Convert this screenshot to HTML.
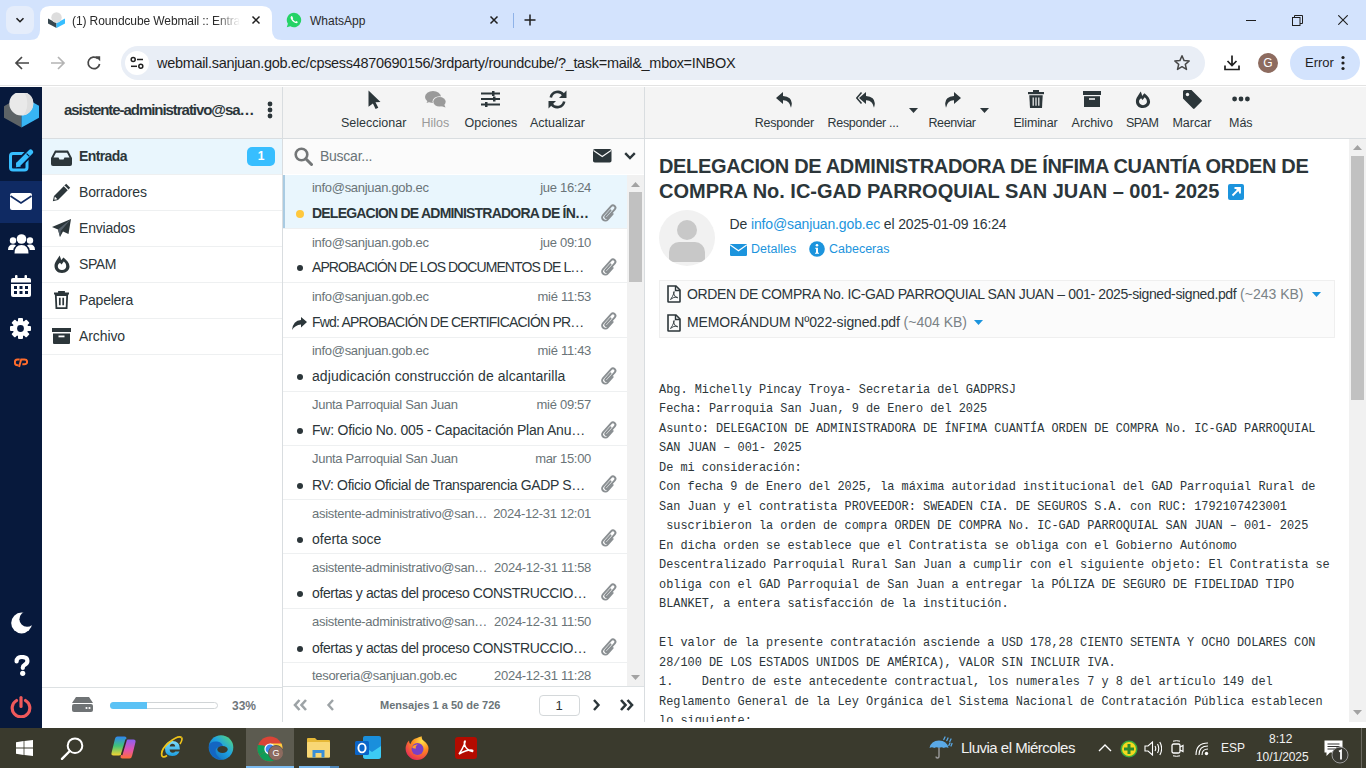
<!DOCTYPE html>
<html><head><meta charset="utf-8">
<style>
*{box-sizing:border-box;margin:0;padding:0}
html,body{width:1366px;height:768px;overflow:hidden;background:#fff;font-family:"Liberation Sans",sans-serif;color:#2c363a}
.a{position:absolute}
.nw{white-space:nowrap}
/* chrome */
#tabs{left:0;top:0;width:1366px;height:40px;background:#d3e3fd}
#toolbar{left:0;top:40px;width:1366px;height:46px;background:#fff;border-bottom:1px solid #e3e3e3}
#page{left:0;top:87px;width:1366px;height:641px;background:#fff}
#taskbar{left:0;top:728px;width:1366px;height:40px;background:#3a3a2d}
/* roundcube */
#menu{left:0;top:87px;width:42px;height:641px;background:#07193c}
#folders{left:42px;top:87px;width:241px;height:635px;background:#fff;border-right:1px solid #d9dde0}
#list{left:283px;top:87px;width:362px;height:635px;background:#fff;border-right:1px solid #d9dde0}
#msg{left:645px;top:87px;width:721px;height:641px;background:#fff}
.hdr{background:#f4f4f4;border-bottom:1px solid #d9dde0}
</style></head><body>
<div id="tabs" class="a">
  <div class="a" style="left:6px;top:6px;width:28px;height:28px;border-radius:8px;background:#e5edfb"></div>
  <svg class="a" style="left:14px;top:14px" width="12" height="12" viewBox="0 0 12 12"><path d="M2.5 4.2 L6 7.7 L9.5 4.2" fill="none" stroke="#1f1f1f" stroke-width="1.6"/></svg>
  <!-- active tab -->
  <svg class="a" style="left:30px;top:6px" width="260" height="34" viewBox="0 0 260 34"><path d="M0 34 Q10 34 10 24 L10 10 Q10 0 20 0 L232 0 Q242 0 242 10 L242 24 Q242 34 252 34 Z" fill="#fff"/></svg>
  <svg class="a" style="left:48px;top:12px" width="17" height="16" viewBox="0 0 17 16"><path d="M0 6.5 L8.5 11 L8.5 16 L0 11.5 Z" fill="#37474f"/><path d="M8.5 11 L17 6.5 L17 11.5 L8.5 16 Z" fill="#37beff"/><circle cx="8.5" cy="5.5" r="5.2" fill="#ddd"/><path d="M0 6.5 L8.5 11 L17 6.5 L17 8 L8.5 12.5 L0 8Z" fill="#37474f" opacity="0"/></svg>
  <div class="a nw" style="left:72px;top:14px;width:168px;overflow:hidden;font-size:12px;color:#2a2a2a;letter-spacing:-0.1px;-webkit-mask-image:linear-gradient(90deg,#000 85%,transparent)">(1) Roundcube Webmail :: Entrada</div>
  <svg class="a" style="left:251px;top:15px" width="10" height="10" viewBox="0 0 10 10"><path d="M1.5 1.5 L8.5 8.5 M8.5 1.5 L1.5 8.5" stroke="#1f1f1f" stroke-width="1.5"/></svg>
  <!-- whatsapp tab -->
  <svg class="a" style="left:286px;top:12px" width="16" height="16" viewBox="0 0 16 16"><path d="M8 0.8 A7.2 7.2 0 1 1 4.3 14.2 L0.8 15.2 L1.9 11.8 A7.2 7.2 0 0 1 8 0.8Z" fill="#25d366"/><path d="M5.2 4.2 C4.6 4.8 4.4 5.6 4.9 6.8 C5.6 8.5 7.3 10.4 9.4 11.1 C10.5 11.5 11.3 11.1 11.7 10.4 L11.6 9.8 L10.2 9.1 L9.5 9.8 C8.4 9.4 7.2 8.2 6.6 7.1 L7.2 6.4 L6.6 4.9 L6 4.1Z" fill="#fff"/></svg>
  <div class="a nw" style="left:310px;top:14px;font-size:12px;color:#2a2a2a">WhatsApp</div>
  <svg class="a" style="left:489px;top:15px" width="10" height="10" viewBox="0 0 10 10"><path d="M1.5 1.5 L8.5 8.5 M8.5 1.5 L1.5 8.5" stroke="#1f1f1f" stroke-width="1.5"/></svg>
  <div class="a" style="left:513px;top:13px;width:1px;height:15px;background:#8fb3e8"></div>
  <svg class="a" style="left:524px;top:14px" width="12" height="12" viewBox="0 0 12 12"><path d="M6 0.5 V11.5 M0.5 6 H11.5" stroke="#1f1f1f" stroke-width="1.5"/></svg>
  <!-- window controls -->
  <div class="a" style="left:1246px;top:20px;width:10px;height:1px;background:#1f1f1f"></div>
  <svg class="a" style="left:1292px;top:15px" width="11" height="11" viewBox="0 0 11 11"><rect x="0.5" y="2.5" width="7.5" height="8" fill="none" stroke="#1f1f1f"/><path d="M2.5 2.5 V0.5 H10.5 V8.5 H8" fill="none" stroke="#1f1f1f"/></svg>
  <svg class="a" style="left:1338px;top:15px" width="10" height="10" viewBox="0 0 10 10"><path d="M0.3 0.3 L9.7 9.7 M9.7 0.3 L0.3 9.7" stroke="#1f1f1f" stroke-width="1.1"/></svg>
</div>
<div id="toolbar" class="a">
  <svg class="a" style="left:14px;top:15px" width="16" height="16" viewBox="0 0 16 16"><path d="M15 8 H2 M8 2 L2 8 L8 14" fill="none" stroke="#474747" stroke-width="1.7"/></svg>
  <svg class="a" style="left:50px;top:15px" width="16" height="16" viewBox="0 0 16 16"><path d="M1 8 H14 M8 2 L14 8 L8 14" fill="none" stroke="#b4b4b4" stroke-width="1.7"/></svg>
  <svg class="a" style="left:86px;top:15px" width="16" height="16" viewBox="0 0 16 16"><path d="M13.6 9 A5.8 5.8 0 1 1 11.8 3.6" fill="none" stroke="#474747" stroke-width="1.7"/><path d="M9.2 1.2 H14.2 V6.2 Z" fill="#474747"/></svg>
  <div class="a" style="left:121px;top:6px;width:1084px;height:34px;border-radius:17px;background:#e9eef6"></div>
  <div class="a" style="left:125px;top:11px;width:24px;height:24px;border-radius:12px;background:#fff"></div>
  <svg class="a" style="left:130px;top:16px" width="14" height="14" viewBox="0 0 14 14"><circle cx="3.2" cy="3.5" r="2" fill="none" stroke="#1f1f1f" stroke-width="1.5"/><path d="M7 3.5 H13" stroke="#1f1f1f" stroke-width="1.5"/><circle cx="10.8" cy="10.3" r="2" fill="none" stroke="#1f1f1f" stroke-width="1.5"/><path d="M1 10.3 H7" stroke="#1f1f1f" stroke-width="1.5"/></svg>
  <div class="a nw" style="left:157px;top:15px;font-size:14.5px;letter-spacing:-0.31px;color:#1f1f1f">webmail.sanjuan.gob.ec/cpsess4870690156/3rdparty/roundcube/?_task=mail&amp;_mbox=INBOX</div>
  <svg class="a" style="left:1173px;top:14px" width="18" height="18" viewBox="0 0 18 18"><path d="M9 1.8 L11.1 6.6 L16.2 7 L12.3 10.4 L13.5 15.4 L9 12.7 L4.5 15.4 L5.7 10.4 L1.8 7 L6.9 6.6 Z" fill="none" stroke="#474747" stroke-width="1.5" stroke-linejoin="round"/></svg>
  <svg class="a" style="left:1223px;top:14px" width="18" height="18" viewBox="0 0 18 18"><path d="M9 1.5 V11.5 M4.5 7 L9 11.5 L13.5 7 M2 11.5 V15.5 H16 V11.5" fill="none" stroke="#1f1f1f" stroke-width="1.7"/></svg>
  <div class="a" style="left:1258px;top:13px;width:20px;height:20px;border-radius:10px;background:#8d6b5f;color:#fff;font-size:12px;text-align:center;line-height:20px">G</div>
  <div class="a" style="left:1290px;top:6px;width:70px;height:34px;border-radius:17px;background:#d3e3fd"></div>
  <div class="a nw" style="left:1305px;top:15px;font-size:13px;color:#1f1f1f">Error</div>
  <svg class="a" style="left:1340px;top:15px" width="6" height="16" viewBox="0 0 6 16"><circle cx="3" cy="2.5" r="1.6" fill="#1f1f1f"/><circle cx="3" cy="8" r="1.6" fill="#1f1f1f"/><circle cx="3" cy="13.5" r="1.6" fill="#1f1f1f"/></svg>
</div>
<div id="page" class="a"></div>
<div id="menu" class="a">
  <!-- logo -->
  <svg class="a" style="left:4px;top:6px" width="36" height="36" viewBox="0 0 36 36"><path d="M0 13.3 L17.5 3 L17.5 34.5 L0 24.8 Z" fill="#5d6366"/><path d="M17.5 3 L35 12.8 L35 24.8 L17.5 34.5 Z" fill="#37b4f3"/><circle cx="17.3" cy="10.6" r="12" fill="#e9e9e9"/><path d="M17.3 -1.4 A12 12 0 0 1 17.3 22.6 A6 12 0 0 0 17.3 -1.4Z" fill="#dedede"/></svg>
  <!-- compose -->
  <svg class="a" style="left:9px;top:62px" width="25" height="24" viewBox="0 0 25 24"><rect x="1.5" y="4.5" width="16.5" height="16.5" rx="2.5" fill="none" stroke="#37beff" stroke-width="3"/><path d="M8.5 16 L22.5 2" stroke="#07193c" stroke-width="8.5"/><path d="M9.6 14.9 L21.6 2.9" stroke="#37beff" stroke-width="5" stroke-linecap="round"/><path d="M7 18.2 L7.6 13 L12 17.4Z" fill="#37beff"/><path d="M17.6 4.6 L20.4 7.4" stroke="#07193c" stroke-width="1.1"/></svg>
  <!-- mail selected -->
  <div class="a" style="left:0;top:94px;width:42px;height:42px;background:#0f2a63"></div>
  <svg class="a" style="left:10px;top:106px" width="22" height="17" viewBox="0 0 22 17"><rect x="0" y="0" width="22" height="17" rx="2" fill="#fff"/><path d="M0.5 3 L11 10 L21.5 3" fill="none" stroke="#0f2a63" stroke-width="1.6"/></svg>
  <!-- contacts -->
  <svg class="a" style="left:8px;top:147px" width="27" height="20" viewBox="0 0 27 20"><circle cx="13.5" cy="5" r="4.8" fill="#fff"/><path d="M6.5 19.5 Q6.5 11 13.5 11 Q20.5 11 20.5 19.5 Z" fill="#fff"/><circle cx="5" cy="6.5" r="3.2" fill="#fff"/><circle cx="22" cy="6.5" r="3.2" fill="#fff"/><path d="M0 16 Q0 10.5 5 10.5 Q7 10.5 8 11.5 Q5.5 13.5 5.3 16Z" fill="#fff"/><path d="M27 16 Q27 10.5 22 10.5 Q20 10.5 19 11.5 Q21.5 13.5 21.7 16Z" fill="#fff"/></svg>
  <!-- calendar -->
  <svg class="a" style="left:11px;top:188px" width="20" height="22" viewBox="0 0 20 22"><rect x="0" y="3" width="20" height="19" rx="2" fill="#fff"/><rect x="4" y="0" width="2.5" height="5" rx="1" fill="#fff"/><rect x="13.5" y="0" width="2.5" height="5" rx="1" fill="#fff"/><rect x="0" y="7.5" width="20" height="1.5" fill="#07193c"/><g fill="#07193c"><rect x="3" y="11" width="3" height="3"/><rect x="8.5" y="11" width="3" height="3"/><rect x="14" y="11" width="3" height="3"/><rect x="3" y="16" width="3" height="3"/><rect x="8.5" y="16" width="3" height="3"/><rect x="14" y="16" width="3" height="3"/></g></svg>
  <!-- gear -->
  <svg class="a" style="left:10px;top:231px" width="21" height="21" viewBox="0 0 21 21"><g fill="#fff" transform="translate(10.5 10.5)"><circle r="7.8"/><rect x="-2.5" y="-10.5" width="5" height="21" rx="1"/><rect x="-2.5" y="-10.5" width="5" height="21" rx="1" transform="rotate(45)"/><rect x="-2.5" y="-10.5" width="5" height="21" rx="1" transform="rotate(90)"/><rect x="-2.5" y="-10.5" width="5" height="21" rx="1" transform="rotate(135)"/></g><circle cx="10.5" cy="10.5" r="3.4" fill="#07193c"/></svg>
  <!-- cpanel -->
  <svg class="a" style="left:14px;top:271px" width="14" height="9.5" viewBox="0 0 16 10"><path d="M6.5 1.2 H3.8 Q1 1.2 1 4.5 Q1 7.8 3.8 7.8 H5.2" fill="none" stroke="#ff6c2c" stroke-width="2.2"/><path d="M5.8 9.8 L8.2 1.2 H11.8 Q15 1.2 15 4 Q15 6.8 11.8 6.8 H9.5" fill="none" stroke="#ff6c2c" stroke-width="2.2"/></svg>
  <!-- moon -->
  <svg class="a" style="left:11px;top:525px" width="21" height="22" viewBox="0 0 21 22"><defs><mask id="mm"><rect width="21" height="22" fill="#fff"/><circle cx="16" cy="7.2" r="7.6" fill="#000"/></mask></defs><circle cx="10.6" cy="11" r="10.4" fill="#fff" mask="url(#mm)"/></svg>
  <!-- question -->
  <svg class="a" style="left:14px;top:568px" width="16" height="21" viewBox="0 0 16 21"><path d="M2.6 6.4 Q2.6 2 8 2 Q13.4 2 13.4 6 Q13.4 8.4 10.6 9.9 Q8.8 10.9 8.8 12.4 L8.8 13" fill="none" stroke="#fff" stroke-width="4.2" stroke-linecap="round"/><circle cx="8.7" cy="18.3" r="2.6" fill="#fff"/></svg>
  <!-- power -->
  <svg class="a" style="left:10px;top:609px" width="22" height="22" viewBox="0 0 22 22"><path d="M6.5 4.5 A8.8 8.8 0 1 0 15.5 4.5" fill="none" stroke="#f0595b" stroke-width="3.2" stroke-linecap="round"/><path d="M11 1.6 V10.5" stroke="#f0595b" stroke-width="3.2" stroke-linecap="round"/></svg>
</div>
<div id="folders" class="a">
  <div class="a hdr" style="left:0;top:0;width:240px;height:52px"></div>
  <div class="a nw" style="left:22px;top:14px;font-size:15px;font-weight:bold;letter-spacing:-1.05px;color:#2c363a">asistente-administrativo@sa…</div>
  <svg class="a" style="left:224px;top:14px" width="8" height="18" viewBox="0 0 8 18"><circle cx="4" cy="3" r="2.4" fill="#2c363a"/><circle cx="4" cy="9" r="2.4" fill="#2c363a"/><circle cx="4" cy="15" r="2.4" fill="#2c363a"/></svg>
  <div class="a" style="left:0;top:52px;width:240px;height:36px;background:#e9f6fd"></div>
  <div class="a" style="left:0;top:87px;width:240px;height:1px;background:#eef0f1"></div>
  <div class="a" style="left:0;top:123px;width:240px;height:1px;background:#eef0f1"></div>
  <div class="a" style="left:0;top:159px;width:240px;height:1px;background:#eef0f1"></div>
  <div class="a" style="left:0;top:195px;width:240px;height:1px;background:#eef0f1"></div>
  <div class="a" style="left:0;top:231px;width:240px;height:1px;background:#eef0f1"></div>
  <div class="a" style="left:0;top:267px;width:240px;height:1px;background:#eef0f1"></div>
  <!-- inbox icon -->
  <svg class="a" style="left:9px;top:63px" width="21" height="16" viewBox="0 0 21 16"><path d="M4 0.5 H17 L21 8 V14 Q21 16 19 16 H2 Q0 16 0 14 V8 Z" fill="#2c363a"/><path d="M5 2.8 H16 L18.5 7.5 H13.5 L12.5 9.5 H8.5 L7.5 7.5 H2.5 Z" fill="#e9f6fd"/></svg>
  <div class="a nw" style="left:37px;top:61px;font-size:14px;font-weight:bold;letter-spacing:-0.6px;color:#2c363a">Entrada</div>
  <div class="a" style="left:205px;top:60px;width:28px;height:19px;border-radius:5px;background:#37beff;color:#fff;font-size:12px;font-weight:bold;text-align:center;line-height:19px">1</div>
  <!-- pencil -->
  <svg class="a" style="left:10px;top:96px" width="19" height="19" viewBox="0 0 19 19"><path d="M14.2 0.8 L18.2 4.8 L6 17 L0.8 18.2 L2 13 Z" fill="#2c363a"/><path d="M12.2 2.8 L16.2 6.8" stroke="#fff" stroke-width="1.2"/><path d="M2.8 13.6 L5.4 16.2 L2.3 16.8Z" fill="#fff"/></svg>
  <div class="a nw" style="left:37px;top:97px;font-size:14px;letter-spacing:-0.15px">Borradores</div>
  <!-- plane -->
  <svg class="a" style="left:10px;top:132px" width="19" height="18" viewBox="0 0 19 18"><path d="M19 0 L0 8 L6 10.5 L8 18 L11 12.5 L16.5 15 Z" fill="#2c363a"/><path d="M19 0 L6 10.5 L8 18 L8.8 12 Z" fill="#56606a"/></svg>
  <div class="a nw" style="left:37px;top:133px;font-size:14px;letter-spacing:-0.2px">Enviados</div>
  <!-- fire -->
  <svg class="a" style="left:12px;top:168px" width="16" height="18" viewBox="0 0 16 18"><path d="M8 18 C3 18 0.5 14.5 0.5 11 C0.5 7 3.5 4.5 5.5 0.5 C6.5 2.5 7 4 7 5.2 L9.5 2.5 C13 5.5 15.5 8 15.5 11.5 C15.5 15 12.5 18 8 18Z" fill="#2c363a"/><path d="M8 15 C5.6 15 3.8 13.3 3.8 11.2 C3.8 9.8 4.6 8.8 6 7.8 L7.5 9.5 L9.8 6.5 C11.3 7.8 12.2 9.3 12.2 11.2 C12.2 13.3 10.4 15 8 15Z" fill="#fff"/></svg>
  <div class="a nw" style="left:37px;top:169px;font-size:14px;letter-spacing:-0.4px">SPAM</div>
  <!-- trash -->
  <svg class="a" style="left:12px;top:204px" width="15" height="18" viewBox="0 0 15 18"><path d="M0 2.5 H15 M5 2.5 V0.8 H10 V2.5" fill="none" stroke="#2c363a" stroke-width="1.8"/><path d="M1.8 4 H13.2 L12.6 17.2 H2.4 Z" fill="none" stroke="#2c363a" stroke-width="1.8"/><path d="M5.8 6.8 V14.2 M9.2 6.8 V14.2" stroke="#2c363a" stroke-width="1.7"/></svg>
  <div class="a nw" style="left:37px;top:205px;font-size:14px;letter-spacing:-0.25px">Papelera</div>
  <!-- archive -->
  <svg class="a" style="left:10px;top:241px" width="19" height="16" viewBox="0 0 19 16"><rect x="0" y="0" width="19" height="4" fill="#2c363a"/><path d="M1 5.5 H18 V15 Q18 16 17 16 H2 Q1 16 1 15 Z" fill="#2c363a"/><rect x="6.5" y="7.5" width="6" height="1.8" fill="#fff"/></svg>
  <div class="a nw" style="left:37px;top:241px;font-size:14px;letter-spacing:-0.1px">Archivo</div>
  <!-- footer -->
  <div class="a" style="left:0;top:600px;width:240px;height:1px;background:#dde1e3"></div>
  <svg class="a" style="left:30px;top:610px" width="21" height="15" viewBox="0 0 21 15"><path d="M4 0 H17 L21 6 H0 Z" fill="#6f7375"/><rect x="0" y="7" width="21" height="8" rx="2" fill="#6f7375"/><circle cx="14.5" cy="11" r="1.1" fill="#fff"/><circle cx="17.5" cy="11" r="1.1" fill="#fff"/></svg>
  <div class="a" style="left:68px;top:615px;width:108px;height:7px;border-radius:4px;border:1px solid #d0d4d6;background:#fff"></div>
  <div class="a" style="left:68px;top:615px;width:37px;height:7px;border-radius:4px 0 0 4px;background:#5bc2f5"></div>
  <div class="a nw" style="left:190px;top:612px;font-size:12px;font-weight:bold;color:#6f777b">33%</div>
</div>
<div id="list" class="a">
  <div class="a hdr" style="left:0;top:0;width:361px;height:52px"></div>
  <!-- toolbar -->
  <svg class="a" style="left:85px;top:3px" width="13" height="19" viewBox="0 0 13 19"><path d="M0.5 0.5 L12.5 12 L7.5 12.3 L10.3 17.8 L7.6 19 L4.9 13.4 L0.5 16.8 Z" fill="#2c363a"/></svg>
  <div class="a nw" style="left:58px;top:29px;font-size:12.5px;line-height:14px;color:#2c363a">Seleccionar</div>
  <svg class="a" style="left:142px;top:4px" width="22" height="17" viewBox="0 0 22 17"><ellipse cx="8" cy="6" rx="8" ry="6" fill="#9a9a9a"/><path d="M1.5 12 L3 9 L6 10.5Z" fill="#9a9a9a"/><ellipse cx="14.5" cy="10.5" rx="7" ry="5.3" fill="#f4f4f4"/><ellipse cx="14.5" cy="10.8" rx="6.2" ry="4.8" fill="#9a9a9a"/><path d="M20.5 16.5 L19 13 L16 15Z" fill="#9a9a9a"/></svg>
  <div class="a nw" style="left:138.5px;top:29px;font-size:12.5px;line-height:14px;color:#9a9a9a">Hilos</div>
  <svg class="a" style="left:198px;top:4px" width="19" height="16" viewBox="0 0 19 16"><path d="M0 2.5 H19 M0 8 H19 M0 13.5 H19" stroke="#2c363a" stroke-width="2.2"/><rect x="11" y="0" width="2.5" height="5" fill="#2c363a"/><rect x="12" y="5.5" width="2.5" height="5" fill="#2c363a"/><rect x="4" y="11" width="2.5" height="5" fill="#2c363a"/></svg>
  <div class="a nw" style="left:181.5px;top:29px;font-size:12.5px;line-height:14px;color:#2c363a">Opciones</div>
  <svg class="a" style="left:265px;top:3px" width="19" height="19" viewBox="0 0 19 19"><path d="M2.8 7.5 A7 7 0 0 1 15.5 5" fill="none" stroke="#2c363a" stroke-width="2.6"/><path d="M18.5 0.5 V8 H11 Z" fill="#2c363a"/><path d="M16.2 11.5 A7 7 0 0 1 3.5 14" fill="none" stroke="#2c363a" stroke-width="2.6"/><path d="M0.5 18.5 V11 H8 Z" fill="#2c363a"/></svg>
  <div class="a nw" style="left:247px;top:29px;font-size:12.5px;line-height:14px;color:#2c363a">Actualizar</div>
  <!-- search -->
  <div class="a" style="left:0;top:52px;width:361px;height:35px;background:#fbfbfb"></div>
  <svg class="a" style="left:11px;top:60px" width="19" height="19" viewBox="0 0 19 19"><circle cx="7.5" cy="7.5" r="5.8" fill="none" stroke="#737677" stroke-width="2.6"/><path d="M11.8 11.8 L17.5 17.5" stroke="#737677" stroke-width="3" stroke-linecap="round"/></svg>
  <div class="a nw" style="left:37px;top:61px;font-size:14px;line-height:16px;letter-spacing:-0.25px;color:#6a7478">Buscar...</div>
  <svg class="a" style="left:310px;top:62px" width="19" height="14" viewBox="0 0 19 14"><rect x="0" y="0" width="18.5" height="13.6" rx="1.8" fill="#2c363a"/><path d="M0.5 1.5 L9.25 7.5 L18 1.5" fill="none" stroke="#fbfbfb" stroke-width="1.1"/></svg>
  <svg class="a" style="left:341px;top:65px" width="12" height="8" viewBox="0 0 12 8"><path d="M1.2 1.2 L6 6 L10.8 1.2" fill="none" stroke="#2c363a" stroke-width="2.4"/></svg>
  <!-- rows -->
  <div class="a" style="left:0;top:88px;width:361px;height:511px;overflow:hidden">
  <div class="a" style="left:0;top:-88px;width:361px;height:700px">
<div class="a" style="left:0;top:88px;width:344px;height:54px;background:#e9f6fd"></div>
<div class="a" style="left:0;top:88px;width:2px;height:54px;background:#a9cbe2"></div>
<div class="a" style="left:0;top:141px;width:344px;height:1px;background:#eef0f1"></div>
<div class="a nw" style="left:29px;top:93px;font-size:13px;line-height:16px;letter-spacing:-0.3px;color:#6a7478">info@sanjuan.gob.ec</div>
<div class="a nw" style="right:53px;top:93px;font-size:13px;line-height:16px;letter-spacing:-0.3px;color:#6a7478">jue 16:24</div>
<div class="a nw" style="left:29px;top:117px;font-size:14px;line-height:18px;font-weight:bold;letter-spacing:-0.79px;color:#2c363a">DELEGACION DE ADMINISTRADORA DE ÍN…</div>
<div class="a" style="left:13px;top:123px;width:8px;height:8px;border-radius:4px;background:#ffc83d"></div>
<svg class="a" style="left:316px;top:115px" width="20" height="22" viewBox="0 0 20 22"><g transform="translate(10.3 11) rotate(42) scale(0.8)"><path d="M4 -2 L4 7.5 A4 4 0 0 1 -4 7.5 L-4 -8 A3 3 0 0 1 2 -8 L2 6 A1.5 1.5 0 0 1 -1 6 L-1 -3.5" fill="none" stroke="#8a8f92" stroke-width="2.4" stroke-linecap="round"/></g></svg>
<div class="a" style="left:0;top:195px;width:344px;height:1px;background:#eef0f1"></div>
<div class="a nw" style="left:29px;top:148px;font-size:13px;line-height:16px;letter-spacing:-0.3px;color:#6a7478">info@sanjuan.gob.ec</div>
<div class="a nw" style="right:53px;top:148px;font-size:13px;line-height:16px;letter-spacing:-0.3px;color:#6a7478">jue 09:10</div>
<div class="a" style="left:14px;top:178px;width:6px;height:6px;border-radius:3px;background:#2c363a"></div>
<div class="a nw" style="left:29px;top:171px;font-size:14px;line-height:18px;letter-spacing:-0.91px;color:#2c363a">APROBACIÓN DE LOS DOCUMENTOS DE L…</div>
<svg class="a" style="left:316px;top:169px" width="20" height="22" viewBox="0 0 20 22"><g transform="translate(10.3 11) rotate(42) scale(0.8)"><path d="M4 -2 L4 7.5 A4 4 0 0 1 -4 7.5 L-4 -8 A3 3 0 0 1 2 -8 L2 6 A1.5 1.5 0 0 1 -1 6 L-1 -3.5" fill="none" stroke="#8a8f92" stroke-width="2.4" stroke-linecap="round"/></g></svg>
<div class="a" style="left:0;top:250px;width:344px;height:1px;background:#eef0f1"></div>
<div class="a nw" style="left:29px;top:202px;font-size:13px;line-height:16px;letter-spacing:-0.3px;color:#6a7478">info@sanjuan.gob.ec</div>
<div class="a nw" style="right:53px;top:202px;font-size:13px;line-height:16px;letter-spacing:-0.3px;color:#6a7478">mié 11:53</div>
<svg class="a" style="left:9px;top:230px" width="15" height="13" viewBox="0 0 15 13"><path d="M15 5 L9 0 V3 Q1 3.5 0 13 Q3 8 9 7.5 V10.5 Z" fill="#2c363a"/></svg>
<div class="a nw" style="left:29px;top:226px;font-size:14px;line-height:18px;letter-spacing:-0.79px;color:#2c363a">Fwd: APROBACIÓN DE CERTIFICACIÓN PR…</div>
<svg class="a" style="left:316px;top:223px" width="20" height="22" viewBox="0 0 20 22"><g transform="translate(10.3 11) rotate(42) scale(0.8)"><path d="M4 -2 L4 7.5 A4 4 0 0 1 -4 7.5 L-4 -8 A3 3 0 0 1 2 -8 L2 6 A1.5 1.5 0 0 1 -1 6 L-1 -3.5" fill="none" stroke="#8a8f92" stroke-width="2.4" stroke-linecap="round"/></g></svg>
<div class="a" style="left:0;top:304px;width:344px;height:1px;background:#eef0f1"></div>
<div class="a nw" style="left:29px;top:256px;font-size:13px;line-height:16px;letter-spacing:-0.3px;color:#6a7478">info@sanjuan.gob.ec</div>
<div class="a nw" style="right:53px;top:256px;font-size:13px;line-height:16px;letter-spacing:-0.3px;color:#6a7478">mié 11:43</div>
<div class="a" style="left:14px;top:287px;width:6px;height:6px;border-radius:3px;background:#2c363a"></div>
<div class="a nw" style="left:29px;top:280px;font-size:14px;line-height:18px;letter-spacing:0.07px;color:#2c363a">adjudicación construcción de alcantarilla</div>
<svg class="a" style="left:316px;top:278px" width="20" height="22" viewBox="0 0 20 22"><g transform="translate(10.3 11) rotate(42) scale(0.8)"><path d="M4 -2 L4 7.5 A4 4 0 0 1 -4 7.5 L-4 -8 A3 3 0 0 1 2 -8 L2 6 A1.5 1.5 0 0 1 -1 6 L-1 -3.5" fill="none" stroke="#8a8f92" stroke-width="2.4" stroke-linecap="round"/></g></svg>
<div class="a" style="left:0;top:358px;width:344px;height:1px;background:#eef0f1"></div>
<div class="a nw" style="left:29px;top:310px;font-size:13px;line-height:16px;letter-spacing:-0.3px;color:#6a7478">Junta Parroquial San Juan</div>
<div class="a nw" style="right:53px;top:310px;font-size:13px;line-height:16px;letter-spacing:-0.3px;color:#6a7478">mié 09:57</div>
<div class="a" style="left:14px;top:341px;width:6px;height:6px;border-radius:3px;background:#2c363a"></div>
<div class="a nw" style="left:29px;top:334px;font-size:14px;line-height:18px;letter-spacing:-0.22px;color:#2c363a">Fw: Oficio No. 005 - Capacitación Plan Anu…</div>
<svg class="a" style="left:316px;top:332px" width="20" height="22" viewBox="0 0 20 22"><g transform="translate(10.3 11) rotate(42) scale(0.8)"><path d="M4 -2 L4 7.5 A4 4 0 0 1 -4 7.5 L-4 -8 A3 3 0 0 1 2 -8 L2 6 A1.5 1.5 0 0 1 -1 6 L-1 -3.5" fill="none" stroke="#8a8f92" stroke-width="2.4" stroke-linecap="round"/></g></svg>
<div class="a" style="left:0;top:412px;width:344px;height:1px;background:#eef0f1"></div>
<div class="a nw" style="left:29px;top:364px;font-size:13px;line-height:16px;letter-spacing:-0.3px;color:#6a7478">Junta Parroquial San Juan</div>
<div class="a nw" style="right:53px;top:364px;font-size:13px;line-height:16px;letter-spacing:-0.3px;color:#6a7478">mar 15:00</div>
<div class="a" style="left:14px;top:396px;width:6px;height:6px;border-radius:3px;background:#2c363a"></div>
<div class="a nw" style="left:29px;top:389px;font-size:14px;line-height:18px;letter-spacing:-0.34px;color:#2c363a">RV: Oficio Oficial de Transparencia GADP S…</div>
<svg class="a" style="left:316px;top:386px" width="20" height="22" viewBox="0 0 20 22"><g transform="translate(10.3 11) rotate(42) scale(0.8)"><path d="M4 -2 L4 7.5 A4 4 0 0 1 -4 7.5 L-4 -8 A3 3 0 0 1 2 -8 L2 6 A1.5 1.5 0 0 1 -1 6 L-1 -3.5" fill="none" stroke="#8a8f92" stroke-width="2.4" stroke-linecap="round"/></g></svg>
<div class="a" style="left:0;top:466px;width:344px;height:1px;background:#eef0f1"></div>
<div class="a nw" style="left:29px;top:419px;font-size:13px;line-height:16px;letter-spacing:-0.3px;color:#6a7478">asistente-administrativo@san…</div>
<div class="a nw" style="right:53px;top:419px;font-size:13px;line-height:16px;letter-spacing:-0.3px;color:#6a7478">2024-12-31 12:01</div>
<div class="a" style="left:14px;top:450px;width:6px;height:6px;border-radius:3px;background:#2c363a"></div>
<div class="a nw" style="left:29px;top:443px;font-size:14px;line-height:18px;letter-spacing:0px;color:#2c363a">oferta soce</div>
<svg class="a" style="left:316px;top:440px" width="20" height="22" viewBox="0 0 20 22"><g transform="translate(10.3 11) rotate(42) scale(0.8)"><path d="M4 -2 L4 7.5 A4 4 0 0 1 -4 7.5 L-4 -8 A3 3 0 0 1 2 -8 L2 6 A1.5 1.5 0 0 1 -1 6 L-1 -3.5" fill="none" stroke="#8a8f92" stroke-width="2.4" stroke-linecap="round"/></g></svg>
<div class="a" style="left:0;top:521px;width:344px;height:1px;background:#eef0f1"></div>
<div class="a nw" style="left:29px;top:473px;font-size:13px;line-height:16px;letter-spacing:-0.3px;color:#6a7478">asistente-administrativo@san…</div>
<div class="a nw" style="right:53px;top:473px;font-size:13px;line-height:16px;letter-spacing:-0.3px;color:#6a7478">2024-12-31 11:58</div>
<div class="a" style="left:14px;top:504px;width:6px;height:6px;border-radius:3px;background:#2c363a"></div>
<div class="a nw" style="left:29px;top:497px;font-size:14px;line-height:18px;letter-spacing:-0.37px;color:#2c363a">ofertas y actas del proceso CONSTRUCCIO…</div>
<svg class="a" style="left:316px;top:494px" width="20" height="22" viewBox="0 0 20 22"><g transform="translate(10.3 11) rotate(42) scale(0.8)"><path d="M4 -2 L4 7.5 A4 4 0 0 1 -4 7.5 L-4 -8 A3 3 0 0 1 2 -8 L2 6 A1.5 1.5 0 0 1 -1 6 L-1 -3.5" fill="none" stroke="#8a8f92" stroke-width="2.4" stroke-linecap="round"/></g></svg>
<div class="a" style="left:0;top:575px;width:344px;height:1px;background:#eef0f1"></div>
<div class="a nw" style="left:29px;top:527px;font-size:13px;line-height:16px;letter-spacing:-0.3px;color:#6a7478">asistente-administrativo@san…</div>
<div class="a nw" style="right:53px;top:527px;font-size:13px;line-height:16px;letter-spacing:-0.3px;color:#6a7478">2024-12-31 11:50</div>
<div class="a" style="left:14px;top:559px;width:6px;height:6px;border-radius:3px;background:#2c363a"></div>
<div class="a nw" style="left:29px;top:552px;font-size:14px;line-height:18px;letter-spacing:-0.37px;color:#2c363a">ofertas y actas del proceso CONSTRUCCIO…</div>
<svg class="a" style="left:316px;top:549px" width="20" height="22" viewBox="0 0 20 22"><g transform="translate(10.3 11) rotate(42) scale(0.8)"><path d="M4 -2 L4 7.5 A4 4 0 0 1 -4 7.5 L-4 -8 A3 3 0 0 1 2 -8 L2 6 A1.5 1.5 0 0 1 -1 6 L-1 -3.5" fill="none" stroke="#8a8f92" stroke-width="2.4" stroke-linecap="round"/></g></svg>
<div class="a nw" style="left:29px;top:581px;font-size:13px;line-height:16px;letter-spacing:-0.3px;color:#6a7478">tesoreria@sanjuan.gob.ec</div>
<div class="a nw" style="right:53px;top:581px;font-size:13px;line-height:16px;letter-spacing:-0.3px;color:#6a7478">2024-12-31 11:28</div>
  </div></div>
  <!-- scrollbar -->
  <div class="a" style="left:344px;top:88px;width:17px;height:511px;background:#f1f1f1"></div>
  <svg class="a" style="left:348px;top:95px" width="9" height="5" viewBox="0 0 9 5"><path d="M0 5 L4.5 0 L9 5Z" fill="#a3a3a3"/></svg>
  <div class="a" style="left:346px;top:105px;width:13px;height:90px;background:#c1c1c1"></div>
  <svg class="a" style="left:348px;top:588px" width="9" height="5" viewBox="0 0 9 5"><path d="M0 0 L4.5 5 L9 0Z" fill="#a3a3a3"/></svg>
  <!-- footer -->
  <div class="a" style="left:0;top:599px;width:361px;height:1px;background:#dde1e3"></div>
  <svg class="a" style="left:10px;top:612px" width="15" height="12" viewBox="0 0 15 12"><path d="M6.5 1 L2 6 L6.5 11 M13 1 L8.5 6 L13 11" fill="none" stroke="#9da3a6" stroke-width="2.6"/></svg>
  <svg class="a" style="left:43px;top:612px" width="9" height="12" viewBox="0 0 9 12"><path d="M7 1 L2.5 6 L7 11" fill="none" stroke="#9da3a6" stroke-width="2.4"/></svg>
  <div class="a nw" style="left:97px;top:611px;font-size:11px;line-height:14px;font-weight:bold;color:#6a7478">Mensajes 1 a 50 de 726</div>
  <div class="a" style="left:255.5px;top:607.5px;width:41px;height:21px;border:1px solid #d4d8da;border-radius:4px;background:#fff;font-size:13px;line-height:19px;text-align:center;color:#2c363a">1</div>
  <svg class="a" style="left:309px;top:612px" width="9" height="12" viewBox="0 0 9 12"><path d="M2 1 L6.5 6 L2 11" fill="none" stroke="#2c363a" stroke-width="2.4"/></svg>
  <svg class="a" style="left:336px;top:612px" width="16" height="12" viewBox="0 0 16 12"><path d="M2 1 L6.5 6 L2 11 M8.5 1 L13 6 L8.5 11" fill="none" stroke="#2c363a" stroke-width="2.6"/></svg>
</div>
<div id="msg" class="a">
  <div class="a hdr" style="left:0;top:0;width:721px;height:52px"></div>
<div class="a nw" style="left:109.79999999999995px;top:29px;font-size:12.5px;line-height:14px;letter-spacing:-0.22px;color:#2c363a">Responder</div>
<svg class="a" style="left:131px;top:5px" width="18" height="16" viewBox="0 0 18 16"><path d="M7 0 L0 6 L7 12 V8.3 Q13.5 8 15 15.8 Q18.5 5.2 7 4 Z" fill="#2c363a"/></svg>
<div class="a nw" style="left:182.5px;top:29px;font-size:12.5px;line-height:14px;letter-spacing:-0.3px;color:#2c363a">Responder ...</div>
<svg class="a" style="left:211px;top:5px" width="21" height="16" viewBox="0 0 21 16"><path d="M10 0 L3 6 L10 12 V8.3 Q16.5 8 18 15.8 Q21.5 5.2 10 4 Z" fill="#2c363a"/><path d="M5.5 0.5 L0.8 6 L5.5 11.5" fill="none" stroke="#2c363a" stroke-width="1.5"/></svg><svg class="a" style="left:264px;top:21px" width="9" height="5" viewBox="0 0 9 5"><path d="M0 0 H9 L4.5 5Z" fill="#2c363a"/></svg>
<div class="a nw" style="left:283.4px;top:29px;font-size:12.5px;line-height:14px;letter-spacing:-0.35px;color:#2c363a">Reenviar</div>
<svg class="a" style="left:298px;top:5px" width="18" height="16" viewBox="0 0 18 16"><path d="M11 0 L18 6 L11 12 V8.3 Q4.5 8 3 15.8 Q-0.5 5.2 11 4 Z" fill="#2c363a"/></svg><svg class="a" style="left:335px;top:21px" width="9" height="5" viewBox="0 0 9 5"><path d="M0 0 H9 L4.5 5Z" fill="#2c363a"/></svg>
<div class="a nw" style="left:368.4px;top:29px;font-size:12.5px;line-height:14px;letter-spacing:-0.12px;color:#2c363a">Eliminar</div>
<svg class="a" style="left:383px;top:3px" width="16" height="18" viewBox="0 0 16 18"><rect x="0" y="2" width="16" height="2.2" fill="#2c363a"/><rect x="5" y="0" width="6" height="2.5" fill="#2c363a"/><path d="M1.3 5.2 H14.7 L14 18 H2 Z" fill="#2c363a"/><path d="M5.2 7.5 V15.8 M8 7.5 V15.8 M10.8 7.5 V15.8" stroke="#f4f4f4" stroke-width="1.2"/></svg>
<div class="a nw" style="left:426.5999999999999px;top:29px;font-size:12.5px;line-height:14px;letter-spacing:-0.05px;color:#2c363a">Archivo</div>
<svg class="a" style="left:438px;top:4px" width="18" height="16" viewBox="0 0 18 16"><rect x="0" y="0" width="18" height="4" fill="#2c363a"/><path d="M1 5.2 H17 V16 H1 Z" fill="#2c363a"/><rect x="6" y="7.2" width="6" height="1.6" fill="#f4f4f4"/></svg>
<div class="a nw" style="left:481px;top:29px;font-size:12.5px;line-height:14px;letter-spacing:-0.5px;color:#2c363a">SPAM</div>
<svg class="a" style="left:490px;top:4px" width="16" height="17" viewBox="0 0 16 18"><path d="M8 18 C3 18 0.5 14.5 0.5 11 C0.5 7 3.5 4.5 5.5 0.5 C6.5 2.5 7 4 7 5.2 L9.5 2.5 C13 5.5 15.5 8 15.5 11.5 C15.5 15 12.5 18 8 18Z" fill="#2c363a"/><path d="M8 15 C5.6 15 3.8 13.3 3.8 11.2 C3.8 9.8 4.6 8.8 6 7.8 L7.5 9.5 L9.8 6.5 C11.3 7.8 12.2 9.3 12.2 11.2 C12.2 13.3 10.4 15 8 15Z" fill="#f4f4f4"/></svg>
<div class="a nw" style="left:527.4000000000001px;top:29px;font-size:12.5px;line-height:14px;letter-spacing:0.04px;color:#2c363a">Marcar</div>
<svg class="a" style="left:538px;top:3px" width="19" height="19" viewBox="0 0 19 19"><path d="M0 1.5 Q0 0 1.5 0 H8.5 L18.5 10 Q19.3 10.8 18.5 11.6 L11.6 18.5 Q10.8 19.3 10 18.5 L0 8.5 Z" fill="#2c363a"/><circle cx="4.5" cy="4.5" r="1.7" fill="#f4f4f4"/></svg>
<div class="a nw" style="left:584px;top:29px;font-size:12.5px;line-height:14px;letter-spacing:0px;color:#2c363a">Más</div>
<svg class="a" style="left:587px;top:9px" width="18" height="6" viewBox="0 0 18 6"><circle cx="2.6" cy="3" r="2.4" fill="#2c363a"/><circle cx="9" cy="3" r="2.4" fill="#2c363a"/><circle cx="15.4" cy="3" r="2.4" fill="#2c363a"/></svg>
  <!-- heading -->
  <div class="a nw" style="left:14px;top:67px;font-size:20px;line-height:25px;font-weight:bold;letter-spacing:-0.34px;color:#2c363a">DELEGACION DE ADMINISTRADORA DE ÍNFIMA CUANTÍA ORDEN DE</div>
  <div class="a nw" style="left:14px;top:92px;font-size:20px;line-height:25px;font-weight:bold;letter-spacing:-0.01px;color:#2c363a">COMPRA No. IC-GAD PARROQUIAL SAN JUAN – 001- 2025</div>
  <svg class="a" style="left:583px;top:97px" width="16" height="16" viewBox="0 0 16 16"><rect x="0" y="0" width="16" height="16" rx="2" fill="#1c94dd"/><path d="M4.5 11.5 L11 5 M6.5 4 H12 V9.5" fill="none" stroke="#fff" stroke-width="1.8"/><path d="M7 4 H12 V9 Z" fill="#fff"/></svg>
  <!-- avatar -->
  <div class="a" style="left:14px;top:123px;width:56px;height:56px;border-radius:28px;background:#f1f1f1;overflow:hidden">
    <div class="a" style="left:18px;top:10px;width:20px;height:20px;border-radius:10px;background:#c8c8c8"></div>
    <div class="a" style="left:10px;top:32px;width:36px;height:20px;border-radius:10px 10px 3px 3px;background:#c8c8c8"></div>
  </div>
  <div class="a nw" style="left:84.6px;top:129px;font-size:14px;line-height:16px;letter-spacing:-0.14px;color:#2c363a">De <span style="color:#1c94dd">info@sanjuan.gob.ec</span> el 2025-01-09 16:24</div>
  <svg class="a" style="left:85px;top:157px" width="17" height="12" viewBox="0 0 17 12"><rect x="0" y="0" width="17" height="12" rx="1.2" fill="#1c94dd"/><path d="M0.3 1 L8.5 6.8 L16.7 1" fill="none" stroke="#fff" stroke-width="1.2"/></svg>
  <div class="a nw" style="left:106px;top:155px;font-size:12.5px;line-height:14px;color:#1c94dd">Detalles</div>
  <svg class="a" style="left:164px;top:154px" width="16" height="16" viewBox="0 0 16 16"><circle cx="8" cy="8" r="7.8" fill="#1c94dd"/><circle cx="8" cy="4.3" r="1.3" fill="#fff"/><path d="M6.2 6.7 H9 V11.8 H10 V12.8 H6 V11.8 H7 V7.7 H6.2Z" fill="#fff"/></svg>
  <div class="a nw" style="left:184px;top:155px;font-size:12.5px;line-height:14px;color:#1c94dd">Cabeceras</div>
  <!-- attachments -->
  <div class="a" style="left:14px;top:193px;width:676px;height:58px;background:#fbfbfb;border:1px solid #efefef"></div>
<svg class="a" style="left:22px;top:198px" width="14" height="18" viewBox="0 0 14 18"><path d="M1 1 H9 L13 5 V16.5 Q13 17 12.5 17 H1.5 Q1 17 1 16.5 Z" fill="none" stroke="#2c363a" stroke-width="1.6"/><path d="M8.5 1 V5.5 H13" fill="none" stroke="#2c363a" stroke-width="1.4"/><path d="M3.5 14.5 Q5.5 12 7 8 Q7.5 6.5 7 6.5 Q6.2 6.5 6.8 9 Q8 12.5 10.5 13 Q11 12 9 12 Q6 12.3 3.5 14.5Z" fill="none" stroke="#2c363a" stroke-width="0.9"/></svg><svg class="a" style="left:22px;top:227px" width="14" height="18" viewBox="0 0 14 18"><path d="M1 1 H9 L13 5 V16.5 Q13 17 12.5 17 H1.5 Q1 17 1 16.5 Z" fill="none" stroke="#2c363a" stroke-width="1.6"/><path d="M8.5 1 V5.5 H13" fill="none" stroke="#2c363a" stroke-width="1.4"/><path d="M3.5 14.5 Q5.5 12 7 8 Q7.5 6.5 7 6.5 Q6.2 6.5 6.8 9 Q8 12.5 10.5 13 Q11 12 9 12 Q6 12.3 3.5 14.5Z" fill="none" stroke="#2c363a" stroke-width="0.9"/></svg>
  <div class="a nw" style="left:42px;top:199px;font-size:14px;line-height:16px;color:#2c363a"><span style="letter-spacing:-0.38px">ORDEN DE COMPRA No. IC-GAD PARROQUIAL SAN JUAN – 001- 2025-signed-signed.pdf</span> <span style="color:#7a8286">(~243 KB)</span></div>
  <svg class="a" style="left:667px;top:205px" width="9" height="5" viewBox="0 0 9 5"><path d="M0 0 H9 L4.5 5Z" fill="#1c94dd"/></svg>
  <div class="a nw" style="left:42px;top:227px;font-size:14px;line-height:16px;color:#2c363a"><span style="letter-spacing:-0.15px">MEMORÁNDUM Nº022-signed.pdf</span> <span style="color:#7a8286">(~404 KB)</span></div>
  <svg class="a" style="left:329px;top:233px" width="9" height="5" viewBox="0 0 9 5"><path d="M0 0 H9 L4.5 5Z" fill="#1c94dd"/></svg>
  <!-- body -->
  <div class="a" style="left:0;top:52px;width:704px;height:583px;overflow:hidden"><pre class="a" style="left:14px;top:242px;margin:0;font-family:'Liberation Mono',monospace;font-size:11.9px;line-height:19.47px;color:#2c363a">Abg. Michelly Pincay Troya- Secretaria del GADPRSJ
Fecha: Parroquia San Juan, 9 de Enero del 2025
Asunto: DELEGACION DE ADMINISTRADORA DE ÍNFIMA CUANTÍA ORDEN DE COMPRA No. IC-GAD PARROQUIAL
SAN JUAN – 001- 2025
De mi consideración:
Con fecha 9 de Enero del 2025, la máxima autoridad institucional del GAD Parroquial Rural de
San Juan y el contratista PROVEEDOR: SWEADEN CIA. DE SEGUROS S.A. con RUC: 1792107423001
 suscribieron la orden de compra ORDEN DE COMPRA No. IC-GAD PARROQUIAL SAN JUAN – 001- 2025
En dicha orden se establece que el Contratista se obliga con el Gobierno Autónomo
Descentralizado Parroquial Rural San Juan a cumplir con el siguiente objeto: El Contratista se
obliga con el GAD Parroquial de San Juan a entregar la PÓLIZA DE SEGURO DE FIDELIDAD TIPO
BLANKET, a entera satisfacción de la institución.

El valor de la presente contratación asciende a USD 178,28 CIENTO SETENTA Y OCHO DOLARES CON
28/100 DE LOS ESTADOS UNIDOS DE AMÉRICA), VALOR SIN INCLUIR IVA.
1.    Dentro de este antecedente contractual, los numerales 7 y 8 del artículo 149 del
Reglamento General de la Ley Orgánica del Sistema Nacional de Contratación Pública establecen
lo siguiente:</pre></div>
  <!-- scrollbar -->
  <div class="a" style="left:704px;top:52px;width:17px;height:583px;background:#f1f1f1"></div>
  <svg class="a" style="left:708px;top:58px" width="9" height="5" viewBox="0 0 9 5"><path d="M0 5 L4.5 0 L9 5Z" fill="#a3a3a3"/></svg>
  <div class="a" style="left:706px;top:69px;width:13px;height:244px;background:#c1c1c1"></div>
  <svg class="a" style="left:708px;top:623px" width="9" height="5" viewBox="0 0 9 5"><path d="M0 0 L4.5 5 L9 0Z" fill="#a3a3a3"/></svg>
</div>
<div id="taskbar" class="a">
  <!-- start -->
  <svg class="a" style="left:16px;top:12px" width="17" height="16" viewBox="0 0 17 16"><path d="M0 2.2 L7.6 1.1 V7.5 H0Z M8.4 1 L17 0 V7.5 H8.4Z M0 8.5 H7.6 V14.9 L0 13.8Z M8.4 8.5 H17 V16 L8.4 15Z" fill="#fff"/></svg>
  <!-- search -->
  <svg class="a" style="left:60px;top:9px" width="25" height="23" viewBox="0 0 25 23"><circle cx="15" cy="8.7" r="7.3" fill="none" stroke="#fff" stroke-width="2"/><path d="M9.8 14 L2 21.8" stroke="#fff" stroke-width="2.4" stroke-linecap="round"/></svg>
  <!-- copilot -->
  <svg class="a" style="left:111px;top:8px" width="25" height="23" viewBox="0 0 25 23"><defs><linearGradient id="cp1" x1="0" y1="0" x2="0" y2="1"><stop offset="0" stop-color="#2f86f2"/><stop offset="0.5" stop-color="#41c477"/><stop offset="1" stop-color="#f5d531"/></linearGradient><linearGradient id="cp2" x1="0" y1="0" x2="0" y2="1"><stop offset="0" stop-color="#8c5ff2"/><stop offset="0.55" stop-color="#e353ae"/><stop offset="1" stop-color="#ff6e37"/></linearGradient></defs><path d="M6.5 0.5 H13.5 Q16 0.5 15.3 3 L11 17.5 Q10.3 19.5 8 19.5 H2.5 Q0 19.5 0.5 17 L3.8 3.5 Q4.4 0.5 6.5 0.5Z" fill="url(#cp1)"/><path d="M18.5 22.5 H11.5 Q9 22.5 9.7 20 L14 5.5 Q14.7 3.5 17 3.5 H22.5 Q25 3.5 24.5 6 L21.2 19.5 Q20.6 22.5 18.5 22.5Z" fill="url(#cp2)"/><path d="M15.2 3.5 L10.6 19" stroke="#2e2d24" stroke-width="1.6"/></svg>
  <!-- IE -->
  <svg class="a" style="left:160px;top:7px" width="24" height="24" viewBox="0 0 24 24"><defs><linearGradient id="ie1" x1="0" y1="0" x2="0" y2="1"><stop offset="0" stop-color="#7fdcfb"/><stop offset="1" stop-color="#1d9fe0"/></linearGradient></defs><path d="M19.5 16.5 Q17.5 21 12.3 21 Q5 21 5 13.5 Q5 6 12.3 6 Q19.8 6 19.8 13.5 V14.5 H9.6 Q10 17.8 12.5 17.8 Q14.5 17.8 15.3 16.5Z M9.7 11.6 H15.2 Q15 8.8 12.4 8.8 Q10 8.8 9.7 11.6Z" fill="url(#ie1)" fill-rule="evenodd"/><path d="M21.5 2.5 Q18.5 0 9 7.5 Q0 15 2 21 Q3.5 23 7 20.5" fill="none" stroke="#f0c419" stroke-width="1.7"/><path d="M21.5 2.5 Q23 4.5 20 9" fill="none" stroke="#f0c419" stroke-width="1.7"/></svg>
  <!-- edge -->
  <svg class="a" style="left:208px;top:7px" width="26" height="25" viewBox="0 0 26 25"><defs><linearGradient id="ed1" x1="0" y1="1" x2="1" y2="0"><stop offset="0" stop-color="#0d5fb0"/><stop offset="0.55" stop-color="#1fa2e2"/><stop offset="1" stop-color="#5ee06a"/></linearGradient></defs><circle cx="13" cy="12.5" r="12.3" fill="url(#ed1)"/><path d="M1 10 Q3 6 9 6.5 Q14 7 15 11.5 Q9 11 7.5 15 Q7 21 14 24.5 Q3 24 1 13Z" fill="#1466c2"/><ellipse cx="14.5" cy="14.5" rx="5.2" ry="3.4" fill="#3a3a2d"/><path d="M25 15 Q22 21 15 21.5 Q10 21.5 9.5 17" fill="none" stroke="#4cc6f0" stroke-width="0"/></svg>
  <!-- chrome active -->
  <div class="a" style="left:246px;top:0;width:48px;height:40px;background:#5c5b50"></div>
  <div class="a" style="left:246px;top:38px;width:48px;height:2px;background:#7cbbf0"></div>
  <svg class="a" style="left:257px;top:8px" width="27" height="26" viewBox="0 0 27 26"><circle cx="13" cy="13" r="12.5" fill="#db4437"/><path d="M13 13 L2.2 19.3 A12.5 12.5 0 0 0 13 25.5 L13 25.5 A12.5 12.5 0 0 0 19.2 23.8Z" fill="#0f9d58"/><path d="M13 13 L2.2 19.3 A12.5 12.5 0 0 1 0.9 9 L6.7 9.5Z" fill="#0f9d58"/><path d="M13 13 L25.5 13 A12.5 12.5 0 0 1 19.2 23.8 Z M13 7.5 H24.6 A12.5 12.5 0 0 1 25.5 13 H13Z" fill="#ffcd40"/><circle cx="13" cy="13" r="5.6" fill="#fff"/><circle cx="13" cy="13" r="4.4" fill="#4285f4"/></svg>
  <div class="a" style="left:268px;top:17px;width:16px;height:16px;border-radius:8px;background:#8d6b5f;border:1px solid #5c5b50;color:#fff;font-size:9px;line-height:14px;text-align:center">G</div>
  <!-- explorer -->
  <svg class="a" style="left:307px;top:10px" width="23" height="20" viewBox="0 0 23 20"><path d="M0 1 Q0 0 1 0 H8 L10 2 H22 Q23 2 23 3 V18.5 Q23 19.5 22 19.5 H1 Q0 19.5 0 18.5Z" fill="#e6b837"/><rect x="0" y="4" width="23" height="15.5" rx="1" fill="#f8d775"/><path d="M5.5 19.5 V12 H17.5 V19.5 H14.5 V15 H8.5 V19.5Z" fill="#3a8fd8"/></svg>
  <div class="a" style="left:299px;top:38px;width:31px;height:2px;background:#7cbbf0"></div>
  <div class="a" style="left:330px;top:38px;width:9px;height:2px;background:#4f86b8"></div>
  <!-- outlook -->
  <svg class="a" style="left:355px;top:8px" width="26" height="23" viewBox="0 0 26 23"><path d="M8 2 Q8 0 10 0 H24 Q26 0 26 2 V20 Q26 23 23 23 H11 Q8 23 8 20Z" fill="#1a8fdc"/><path d="M8 10 L17 16 L26 10 V20 Q26 23 23 23 H11 Q8 23 8 20Z" fill="#3ccbf4"/><rect x="0" y="5" width="14" height="14" rx="1.5" fill="#0a64c8"/><ellipse cx="7" cy="12" rx="3.6" ry="4.4" fill="none" stroke="#fff" stroke-width="1.9"/></svg>
  <!-- firefox -->
  <svg class="a" style="left:405px;top:8px" width="24" height="24" viewBox="0 0 24 24"><defs><radialGradient id="ff1" cx="0.7" cy="0.2" r="0.9"><stop offset="0" stop-color="#ffe14a"/><stop offset="0.45" stop-color="#ff8a1f"/><stop offset="1" stop-color="#e5245c"/></radialGradient></defs><path d="M12 24 A11.5 11.5 0 0 1 0.8 10.5 Q2 6 4 4.5 Q4 7 5.5 8 Q7 3 12 2 Q15 0 17 0.5 Q16 3 19 5 Q24 9 23.5 13 A11.5 11.5 0 0 1 12 24Z" fill="url(#ff1)"/><circle cx="12.5" cy="13" r="6" fill="#7b3fc6"/><path d="M7 11 Q9 8 13 8.5 Q10 10 11 12.5 Q8 13 7 11Z" fill="#ff9b2d"/></svg>
  <!-- acrobat -->
  <svg class="a" style="left:455px;top:9px" width="22" height="22" viewBox="0 0 22 22"><rect x="0" y="0" width="22" height="22" rx="3" fill="#b30b00"/><path d="M4 17 Q7 13 9.5 7 Q10.5 4 10 4 Q9 4 9.5 7.5 Q11 13 17.5 14.5 Q18.5 13 16 13 Q11 13 4 17Z" fill="none" stroke="#fff" stroke-width="1.5"/></svg>
  <!-- weather -->
  <svg class="a" style="left:929px;top:8px" width="24" height="23" viewBox="0 0 24 23"><path d="M0.5 12 Q2 4.5 10 4.5 Q18 4.5 19.5 12 Q17 10.5 14.8 12 Q12.5 10.5 10 12 Q7.5 10.5 5.2 12 Q3 10.5 0.5 12Z" fill="#5aa9e6"/><path d="M10 12 V20 Q10 22 8.5 22 Q7 22 7 20.5" fill="none" stroke="#9a9a9a" stroke-width="1.4"/><path d="M16 1 L14.8 3.5 M19 2 L17.8 4.5 M22 3 L20.8 5.5 M21 7 L19.8 9.5 M23 7.5 L22 10" stroke="#5aa9e6" stroke-width="1.3" stroke-linecap="round"/></svg>
  <div class="a nw" style="left:961px;top:12px;font-size:15px;line-height:16px;letter-spacing:-0.5px;color:#f2f2f2">Lluvia el Miércoles</div>
  <!-- tray -->
  <svg class="a" style="left:1098px;top:16px" width="14" height="8" viewBox="0 0 14 8"><path d="M1 7 L7 1 L13 7" fill="none" stroke="#fff" stroke-width="1.4"/></svg>
  <svg class="a" style="left:1120px;top:12px" width="18" height="18" viewBox="0 0 18 18"><circle cx="9" cy="9" r="8.5" fill="#39a83c"/><circle cx="9" cy="9" r="7" fill="#f4d81e"/><path d="M9 4 V14 M4 9 H14" stroke="#2a8a2e" stroke-width="3"/></svg>
  <svg class="a" style="left:1144px;top:13px" width="18" height="15" viewBox="0 0 18 15"><path d="M1 5 H4 L8.5 1 V14 L4 10 H1Z" fill="none" stroke="#fff" stroke-width="1.1"/><path d="M11 5 Q12.5 7.5 11 10 M13.5 3 Q16 7.5 13.5 12 M15.8 1 Q19.5 7.5 15.8 14" fill="none" stroke="#fff" stroke-width="1.1"/></svg>
  <svg class="a" style="left:1171px;top:12px" width="13" height="17" viewBox="0 0 13 17"><rect x="1" y="4" width="8" height="9" rx="1.5" fill="none" stroke="#fff" stroke-width="1.3"/><path d="M9 7 L12 5.5 V11.5 L9 10" fill="none" stroke="#fff" stroke-width="1.2"/><path d="M2 1.2 Q5.5 0.2 9 1.2 M2 15.8 Q5.5 16.8 9 15.8" fill="none" stroke="#fff" stroke-width="1"/></svg>
  <svg class="a" style="left:1195px;top:14px" width="14" height="14" viewBox="0 0 14 14"><path d="M1 13 Q1 1 13 1 M4 13 Q4 4 13 4 M7 13 Q7 7 13 7" fill="none" stroke="#fff" stroke-width="1.1"/><circle cx="11.5" cy="11.5" r="1.7" fill="#fff"/></svg>
  <div class="a nw" style="left:1221px;top:13px;font-size:12px;line-height:14px;color:#f2f2f2">ESP</div>
  <div class="a nw" style="left:1269px;top:4px;font-size:12px;line-height:14px;color:#f2f2f2">8:12</div>
  <div class="a nw" style="left:1256px;top:22px;font-size:12px;line-height:14px;letter-spacing:-0.1px;color:#f2f2f2">10/1/2025</div>
  <svg class="a" style="left:1324px;top:12px" width="26" height="24" viewBox="0 0 26 24"><path d="M0.5 0.5 H18.5 V12.5 H6 L2.5 16 V12.5 H0.5Z" fill="#fff"/><path d="M3.5 4 H15.5 M3.5 6.5 H15.5 M3.5 9 H12" stroke="#333" stroke-width="1"/><circle cx="16" cy="15" r="8" fill="#3a3a33" stroke="#9a9a9a" stroke-width="1"/><path d="M15 11.5 L17 10.5 V19.5" fill="none" stroke="#fff" stroke-width="1.8"/></svg>
  <div class="a" style="left:1361px;top:0;width:1px;height:40px;background:#6a6860"></div>
</div>
</body></html>
